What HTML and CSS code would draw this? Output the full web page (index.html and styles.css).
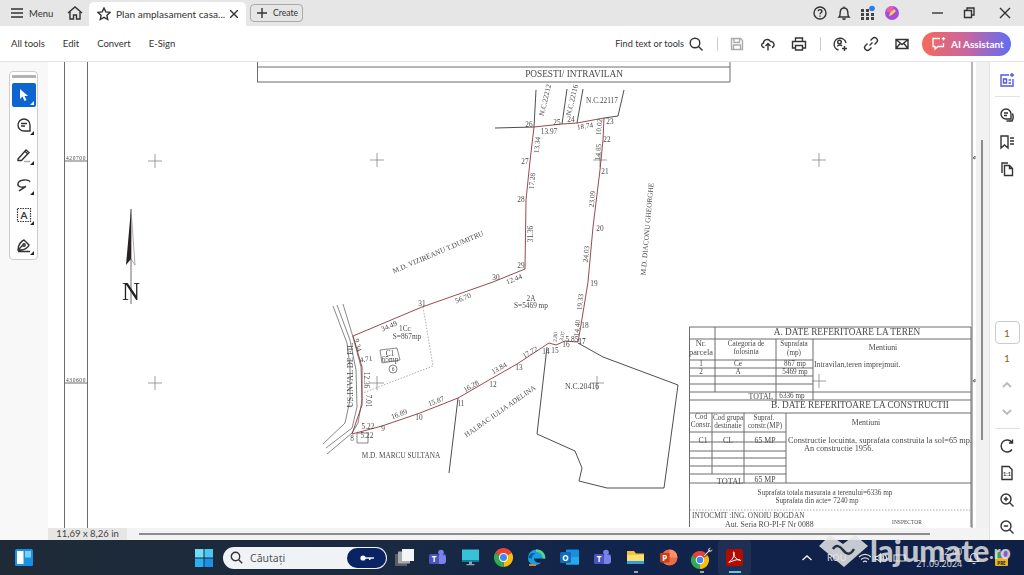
FILE: index.html
```html
<!DOCTYPE html>
<html lang="en">
<head>
    <meta charset="UTF-8">
    <meta name="viewport" content="width=device-width, initial-scale=1.0">
    <title>Plan amplasament casa</title>
    <link rel="stylesheet" href="styles.css">
</head>
<body>
    <div class="titlebar">
        <svg class="ico" width="12" height="12" viewBox="0 0 12 12"><path d="M0 2h12M0 6h12M0 10h12"/></svg>
        <span class="menu-label">Menu</span>
        <svg class="ico home" width="16" height="16" viewBox="0 0 16 16"><path d="M1 8 8 2l7 6M3 7v7h3.5v-4h3v4H13V7"/></svg>
        <div class="tab">
            <svg class="ico" width="14" height="14" viewBox="0 0 14 14"><path d="m7 1 1.8 3.9 4.2.5-3.100 2.900.8 4.200L7 10.400 3.300 12.500l.8-4.200L1 5.400l4.200-.5z"/></svg>
            <span class="tab-title">Plan amplasament casa...</span>
            <svg class="ico tab-close" width="8" height="8" viewBox="0 0 8 8"><path d="m0 0 8 8M8 0 0 8"/></svg>
        </div>
        <button class="create"><svg class="ico" width="10" height="10" viewBox="0 0 10 10"><path d="M5 0v10M0 5h10"/></svg>Create</button>
        <div class="title-right">
            <svg class="ico" width="16" height="16" viewBox="0 0 16 16"><circle cx="8" cy="8" r="6"/><path d="M6.200 6.300C6.300 4 10 4.200 9.900 6.400 9.800 7.800 8 7.700 8 9.300M8 10.600v1.200"/></svg>
            <svg class="ico" width="16" height="16" viewBox="0 0 16 16"><path d="M3 12c1.500-1.500 1-3 1.200-5C4.500 4.500 6 3 8 3s3.500 1.500 3.800 4c.2 2-.3 3.500 1.200 5zM6.500 13.500c.7 1 2.300 1 3 0M8 1.500V3"/></svg>
            <svg width="16" height="16" viewBox="0 0 16 16"><path class="dots" d="M1 4h3v3H1zM6 4h3v3H6zM1 8h3v3H1zM6 8h3v3H6zM11 8h3v3h-3zM1 12h3v3H1zM6 12h3v3H6zM11 12h3v3h-3z"/><circle cx="12" cy="3.500" r="2.800" fill="#2680eb"/></svg>
            <svg width="16" height="16" viewBox="0 0 16 16"><circle cx="8" cy="8" r="7" fill="#a44be0"/><path d="M2 6a7 7 0 0 1 8-5l-3 7z" fill="#e85fb0"/><path d="m5 11 1-3 4-4 2 2-4 4z" fill="#f7d24a"/></svg>
            <svg class="ico win-first" width="16" height="16" viewBox="0 0 16 16"><path d="M2 8h11"/></svg>
            <svg class="ico" width="16" height="16" viewBox="0 0 16 16"><path d="M3.500 5.500h7v7h-7zM6 5.500V3h7v7h-2.500"/></svg>
            <svg class="ico win-close" width="16" height="16" viewBox="0 0 16 16"><path d="m3 3 10 10M13 3 3 13"/></svg>
        </div>
    </div>

    <div class="toolbar">
        <nav class="tool-nav">
            <span>All tools</span>
            <span>Edit</span>
            <span>Convert</span>
            <span>E-Sign</span>
        </nav>
        <div class="tool-right">
            <span class="find">Find text or tools</span>
            <svg class="ico search" width="16" height="16" viewBox="0 0 16 16"><circle cx="7" cy="7" r="4.800"/><path d="m10.500 10.500 4 4"/></svg>
            <span class="divider"></span>
            <svg class="ico tool-icon muted" width="16" height="16" viewBox="0 0 16 16"><path d="M2.500 2.500h9l2 2v9h-11zM5 2.500v4h5.500v-4M4.500 13.500v-4.500h7v4.500"/></svg>
            <svg class="ico tool-icon" width="16" height="16" viewBox="0 0 16 16"><path d="M4.500 11.500C1.500 11.500.5 8 3.500 7 3.500 3.500 8.500 2 10.500 5.500c3.500-.5 5 4.500 1.500 6M8 14.500V7.500M5.500 10 8 7.500l2.500 2.500"/></svg>
            <svg class="ico tool-icon" width="16" height="16" viewBox="0 0 16 16"><path d="M4.500 5V2h7v3M4 12H1.500V5.500h13V12H12M4.500 9.500h7v4.500h-7z"/></svg>
            <span class="divider"></span>
            <svg class="ico tool-icon" width="16" height="16" viewBox="0 0 16 16"><path d="M6.500 14A6 6 0 1 1 14 7M5.500 10.500c0-2 4-2 4.500-.5"/><circle cx="7.500" cy="6" r="1.800"/><path d="M12.500 10v5M10 12.500h5"/></svg>
            <svg class="ico tool-icon" width="16" height="16" viewBox="0 0 16 16"><path d="M6.500 9.500 9.500 6.500M7.500 4.500l2-2a2.800 2.800 0 0 1 4 4l-2 2M8.500 11.500l-2 2a2.800 2.800 0 0 1-4-4l2-2"/></svg>
            <svg class="ico tool-icon" width="16" height="16" viewBox="0 0 16 16"><path d="M2 3.500h12v9H2zM2 3.500l6 5 6-5M2 12.500l4.500-5.500M14 12.500 9.500 7"/></svg>
            <button class="ai-btn">
                <svg width="15" height="15" viewBox="0 0 15 15" fill="none" stroke="#fff" stroke-width="1.300"><path d="M9 2.500H2v8h2v2.500l3-2.500h5.500V7"/><path d="M12.500 1v3.500M10.800 2.700h3.400"/><path d="M4.500 6.500h.1M8.500 6.500h.1" stroke-width="2"/></svg>
                AI Assistant
            </button>
        </div>
    </div>

    <div class="workspace">
        <aside class="left-rail">
            <div class="tool-panel">
                <div class="grip"></div>
                <div class="rail-tool selected">
                    <svg width="14" height="14" viewBox="0 0 14 14"><path d="M3 1v10l2.500-2.500L7.500 13l2-1-2-4H11z" fill="#fff"/></svg>
                </div>
                <div class="rail-tool more">
                    <svg class="ico" width="16" height="16" viewBox="0 0 16 16"><path d="M14 8A6 6 0 1 0 8 14h6zM5 6.500h6M5 9h4"/></svg>
                </div>
                <div class="rail-tool more">
                    <svg class="ico" width="16" height="16" viewBox="0 0 16 16"><path d="M2 12 10 3l3 2.500-7.500 8H2zM9 4.500l3 2.500"/><path d="M8 14.500h6" stroke="#aaa"/></svg>
                </div>
                <div class="rail-tool more">
                    <svg class="ico" width="16" height="16" viewBox="0 0 16 16"><path d="M14 5c-1-3-11-3-12 1.500C1 10 6 11 10 9.500 6 12 4 13 3 14"/></svg>
                </div>
                <div class="rail-tool more">
                    <svg class="ico dotted" width="16" height="16" viewBox="0 0 16 16"><path d="M1.500 1.500h13v13h-13z"/><text class="letter" x="8" y="12">A</text></svg>
                </div>
                <div class="rail-tool more">
                    <svg class="ico" width="16" height="16" viewBox="0 0 16 16"><path d="M2 13c0-5 3-9 6-10l5 5c-1 3-5 5-8 5zM2 13l5-5M2 14.500h12"/><circle cx="8" cy="8" r="1.200"/></svg>
                </div>
            </div>
        </aside>

        <main class="doc-column">
            <div class="doc-row">
                <div class="sheet">
                    <svg class="drawing" width="928" height="466" viewBox="48 62 928 466">
                        <!-- sheet frame and title box -->
                        <path class="frame" d="M64.500 62v466M87.500 62v466M972 62v466M257.500 62v20M730 62v20M257 67h473M257 82h473M64 161h24M64 383h24"/>
                        <text class="lbl t9" x="574" y="74">POSESTI/ INTRAVILAN</text>
                        <text class="lbl t55 coord" x="76" y="158">420700</text>
                        <text class="lbl t55 coord" x="76" y="380">430600</text>
                        <path class="frame" d="M973 158l2-2v3zM973 381l2-2v3z"/>

                        <!-- grid crosses -->
                        <path class="cross" d="M148 161h14M155 154v14M370 160h14M377 153v14M593 160h14M600 153v14M812 160h14M819 153v14M148 383h14M155 376v14M370 383h14M377 376v14M590 383h14M597 376v14M812 381h14M819 374v14"/>

                        <!-- north arrow -->
                        <path class="frame" d="M131 209v95"/>
                        <path d="M131 209 126 265 131 259z" fill="#2a2024"/>
                        <path d="M131 209 135 265 131 259" fill="none" stroke="#777" stroke-width=".6"/>
                        <text class="north" x="131" y="291">N</text>

                        <!-- neighbours -->
                        <path class="line" d="M495 128 534 127M536 90 534 127M567 89 562 124M583 89 577 123M624 90 618 116 604 118M458 398 449 473"/>
                        <path class="line" d="M578 343 603 357 678 385 664 488 607 488 579 481 582 468 575 451 537 434 547 347"/>
                        <path class="thin" d="M333 306 347 343 350 367 350 400 345 423 323 444M337 305 350 340 356 370 357 407 352 428 326 448M343 304 353 337 361 367 362 400 358 423 352 433 327 454"/>
                        <path class="thin" d="M357 433h11v10h-11z"/>

                        <!-- parcel boundary -->
                        <polyline class="boundary" points="534,127 562,124 577,123 604,118 603,140 600,170 593,227 588,282 581,325 578,342 565,341 556,345 549,343 517,364 489,380 458,398 420,413 382,426 352,434 362,405 362,367 353,336 422,307 493,282 525,269 526,200 530,161 534,127"/>
                        <path class="dash" d="M423 307 433 366 363 393"/>

                        <!-- house -->
                        <path class="thin" d="M380 350 397 348 400 360 382 363z"/>
                        <circle class="thin" cx="393" cy="369" r="4"/>
                        <text class="lbl t7" x="390" y="353">C1</text>
                        <text class="lbl t7" x="390" y="359">65mp</text>
                        <text class="lbl t55" x="393" y="369">6</text>

                        <!-- point numbers and lengths -->
                        <text class="lbl t7" x="529" y="124">26</text>
                        <text class="lbl t7" x="557" y="122">25</text>
                        <text class="lbl t7" x="571" y="119">24</text>
                        <text class="lbl t7" x="610" y="121">23</text>
                        <text class="lbl t7" x="607" y="139">22</text>
                        <text class="lbl t7" x="605" y="171">21</text>
                        <text class="lbl t7" x="600" y="228">20</text>
                        <text class="lbl t7" x="594" y="283">19</text>
                        <text class="lbl t7" x="585" y="325">18</text>
                        <text class="lbl t7 dark" x="582" y="341">17</text>
                        <text class="lbl t7" x="566" y="344">16</text>
                        <text class="lbl t7" x="555" y="350">15</text>
                        <text class="lbl t7" x="546" y="351">14</text>
                        <text class="lbl t7" x="519" y="367">13</text>
                        <text class="lbl t7" x="493" y="384">12</text>
                        <text class="lbl t7" x="461" y="403">11</text>
                        <text class="lbl t7" x="419" y="417">10</text>
                        <text class="lbl t7" x="383" y="428">9</text>
                        <text class="lbl t7" x="352" y="438">8</text>
                        <text class="lbl t7" x="525" y="161">27</text>
                        <text class="lbl t7" x="521" y="199">28</text>
                        <text class="lbl t7" x="521" y="265">29</text>
                        <text class="lbl t7" x="496" y="277">30</text>
                        <text class="lbl t7" x="422" y="303">31</text>
                        <text class="lbl t7" x="549" y="131">13.97</text>
                        <text class="lbl t7" x="585" y="126" transform="rotate(-8 585 126)">18.74</text>
                        <text class="lbl t7" x="599" y="127" transform="rotate(-85 599 127)">10.02</text>
                        <text class="lbl t7" x="598" y="152" transform="rotate(-85 598 152)">14.85</text>
                        <text class="lbl t7" x="537" y="145" transform="rotate(-85 537 145)">13.34</text>
                        <text class="lbl t7" x="532" y="181" transform="rotate(-85 532 181)">17.28</text>
                        <text class="lbl t7" x="530" y="234" transform="rotate(-90 530 234)">31.36</text>
                        <text class="lbl t7" x="592" y="199" transform="rotate(-85 592 199)">23.09</text>
                        <text class="lbl t7" x="586" y="254" transform="rotate(-85 586 254)">24.03</text>
                        <text class="lbl t7" x="580" y="302" transform="rotate(-85 580 302)">19.33</text>
                        <text class="lbl t7" x="514" y="279" transform="rotate(-22 514 279)">12.44</text>
                        <text class="lbl t7" x="463" y="298" transform="rotate(-22 463 298)">56.70</text>
                        <text class="lbl t7" x="389" y="326" transform="rotate(-22 389 326)">34.49</text>
                        <text class="lbl t7" x="358" y="345" transform="rotate(75 358 345)">9.34</text>
                        <text class="lbl t7" x="366" y="359" transform="rotate(-10 366 359)">4.71</text>
                        <text class="lbl t7" x="366" y="380" transform="rotate(90 366 380)">12.36</text>
                        <text class="lbl t7" x="368" y="401" transform="rotate(90 368 401)">7.01</text>
                        <text class="lbl t7" x="368" y="426">5.22</text>
                        <text class="lbl t7" x="367" y="435">5.22</text>
                        <text class="lbl t7" x="399" y="414" transform="rotate(-20 399 414)">16.89</text>
                        <text class="lbl t7" x="436" y="401" transform="rotate(-20 436 401)">15.87</text>
                        <text class="lbl t7" x="471" y="386" transform="rotate(-30 471 386)">16.28</text>
                        <text class="lbl t7" x="499" y="368" transform="rotate(-30 499 368)">13.84</text>
                        <text class="lbl t7" x="530" y="352" transform="rotate(-30 530 352)">17.72</text>
                        <text class="lbl t55" x="555" y="337" transform="rotate(-85 555 337)">2.80</text>
                        <text class="lbl t55" x="562" y="336" transform="rotate(-75 562 336)">3.07</text>
                        <text class="lbl t7" x="572" y="339">5.85</text>
                        <text class="lbl t7" x="577" y="328" transform="rotate(-85 577 328)">14.40</text>

                        <!-- owners and areas -->
                        <text class="lbl t7" x="545" y="100" transform="rotate(-77 545 100)">N.C.22212</text>
                        <text class="lbl t7" x="572" y="100" transform="rotate(-77 572 100)">N.C.22116</text>
                        <text class="lbl t7" x="602" y="100">N.C.22117</text>
                        <text class="lbl t7" x="438" y="252" transform="rotate(-23 438 252)">M.D. VIZIREANU T.DUMITRU</text>
                        <text class="lbl t7" x="647" y="229" transform="rotate(-85 647 229)">M.D. DIACONU GHEORGHE</text>
                        <text class="lbl t7" x="500" y="411" transform="rotate(-35 500 411)">HALBAC IULIA ADELINA</text>
                        <text class="lbl t7" x="401" y="455">M.D. MARCU SULTANA</text>
                        <text class="lbl t83" x="350" y="375" transform="rotate(-90 350 375)">US.INVAL DE FIL</text>
                        <text class="lbl t75" x="582" y="386">N.C.20416</text>
                        <text class="lbl t7" x="531" y="298">2A</text>
                        <text class="lbl t7" x="531" y="305">S=5469 mp</text>
                        <text class="lbl t7" x="405" y="328">1Cc</text>
                        <text class="lbl t7" x="407" y="336">S=867mp</text>

                        <!-- data table -->
                        <path class="frame" d="M689.500 327v200M971 327v200M689 327h282M689 339h282M689 360h124M689 368h124M689 376h124M689 384h124M689 392h282M689 400h282M689 413h282M689 432h97M689 442h97M689 451h97M689 458h97M689 466h97M689 474h97M689 483h282M715 327v65M776 339v65M813 339v61M712 413v61M744 413v70M786 413v70"/>
                        <path class="dash" d="M690 510h280"/>
                        <text class="lbl t9" x="847" y="332">A. DATE REFERITOARE LA TEREN</text>
                        <text class="lbl t83" x="701" y="343">Nr.</text>
                        <text class="lbl t83" x="701" y="352">parcela</text>
                        <text class="lbl t6" x="746" y="344">Categoria de</text>
                        <text class="lbl t6" x="746" y="352">folosinta</text>
                        <text class="lbl t6" x="794" y="344">Suprafata</text>
                        <text class="lbl t6" x="794" y="353">(mp)</text>
                        <text class="lbl t75" x="883" y="347">Mentiuni</text>
                        <text class="lbl t6" x="701" y="364">1</text>
                        <text class="lbl t6" x="738" y="364">Ce</text>
                        <text class="lbl t6" x="795" y="364">867 mp</text>
                        <text class="txt t75" x="814" y="364">Intravilan,teren imprejmuit.</text>
                        <text class="lbl t6" x="701" y="372">2</text>
                        <text class="lbl t6" x="738" y="372">A</text>
                        <text class="lbl t6" x="795" y="372">5469 mp</text>
                        <text class="lbl t75" x="761" y="396">TOTAL</text>
                        <text class="lbl t6" x="792" y="396">6336 mp</text>
                        <text class="lbl t9" x="860" y="405">B.  DATE REFERITOARE LA CONSTRUCTII</text>
                        <text class="lbl t6" x="701" y="417">Cod</text>
                        <text class="lbl t6" x="701" y="425">Constr.</text>
                        <text class="lbl t6" x="728" y="418">Cod grupa</text>
                        <text class="lbl t6" x="728" y="426">destinatie</text>
                        <text class="lbl t6" x="764" y="418">Supraf.</text>
                        <text class="lbl t6" x="765" y="426">constr.(MP)</text>
                        <text class="lbl t75" x="866" y="422">Mentiuni</text>
                        <text class="lbl t75" x="703" y="440">C1</text>
                        <text class="lbl t75" x="728" y="440">CL</text>
                        <text class="lbl t75" x="765" y="440">65 MP</text>
                        <text class="txt t83" x="788" y="440">Constructie locuinta, suprafata construita la sol=65 mp.</text>
                        <text class="txt t83" x="804" y="448">An constructie 1956.</text>
                        <text class="lbl t83" x="730" y="481">TOTAL</text>
                        <text class="lbl t75" x="765" y="479">65 MP</text>
                        <text class="lbl t6" x="825" y="493">Suprafata totala masurata a terenului=6336 mp</text>
                        <text class="lbl t6" x="817" y="501">Suprafata din acte= 7240 mp</text>
                        <text class="txt t7" x="692" y="515">INTOCMIT :ING. ONOIU BOGDAN</text>
                        <text class="txt t75" x="725" y="524">Aut. Seria RO-PI-F  Nr 0088</text>
                        <text class="lbl t55" x="907" y="522">INSPECTOR</text>
                    </svg>
                </div>
                <div class="gutter"><div class="v-thumb"></div></div>
            </div>
            <div class="statusbar">
                <span class="page-size">11,69 x 8,26 in</span>
                <div class="h-thumb"></div>
            </div>
        </main>

        <aside class="right-rail">
            <div class="rr-btn">
                <svg width="16" height="16" viewBox="0 0 16 16" fill="none" stroke="#5258e4" stroke-width="1.400"><path d="M10 3H2v11h12V7M4.500 7h3v4h-3zM9.500 8h2.500M9.500 11H12"/><path d="M13 1v4M11 3h4"/></svg>
            </div>
            <span class="rr-line"></span>
            <div class="rr-btn">
                <svg class="ico" width="16" height="16" viewBox="0 0 16 16"><path d="M12 7a5 5 0 1 0-5 5h5zM5 6h4M5 8.500h3"/><path d="M13.500 6.500c1 3 .5 6-.5 7.500H7.500"/></svg>
            </div>
            <div class="rr-btn">
                <svg class="ico" width="16" height="16" viewBox="0 0 16 16"><path d="M2 2h7v12l-3.500-3L2 14zM11 4h4M11 7h4M11 10h4"/></svg>
            </div>
            <div class="rr-btn">
                <svg class="ico" width="16" height="16" viewBox="0 0 16 16"><path d="M3 12V2h6M5.500 4.500h5l3 3v7h-8zM10.500 4.500v3h3"/></svg>
            </div>
            <div class="page-box">1</div>
            <div class="rr-btn page-total">1</div>
            <div class="rr-btn">
                <svg class="ico light" width="12" height="12" viewBox="0 0 12 12"><path d="m2 8 4-4 4 4"/></svg>
            </div>
            <div class="rr-btn">
                <svg class="ico light" width="12" height="12" viewBox="0 0 12 12"><path d="m2 4 4 4 4-4"/></svg>
            </div>
            <span class="rr-line"></span>
            <div class="rr-btn rr-after-line">
                <svg class="ico" width="16" height="16" viewBox="0 0 16 16"><path d="M13 11.500A6 6 0 1 1 13 4.500M13.500 1.500v3.500H10"/></svg>
            </div>
            <div class="rr-btn">
                <svg class="ico" width="16" height="16" viewBox="0 0 16 16"><path d="M3 1.500h7l3 3v10H3z"/><text class="fit" x="8" y="11">1:1</text></svg>
            </div>
            <div class="rr-btn">
                <svg class="ico" width="16" height="16" viewBox="0 0 16 16"><circle cx="7" cy="7" r="5"/><path d="m10.500 10.500 4 4M4.800 7h4.400M7 4.800v4.400"/></svg>
            </div>
            <div class="rr-btn">
                <svg class="ico" width="16" height="16" viewBox="0 0 16 16"><circle cx="7" cy="7" r="5"/><path d="m10.500 10.500 4 4M4.800 7h4.400"/></svg>
            </div>
        </aside>
    </div>

    <footer class="taskbar">
        <svg class="widgets" width="18" height="18" viewBox="0 0 18 18"><rect width="18" height="17" rx="1.500" fill="#1a8fe3"/><rect x="2" y="2" width="6.500" height="13" fill="#fff"/><rect x="10" y="2" width="6" height="6.500" fill="#7cd0f7"/></svg>
        <svg class="start" width="18" height="18" viewBox="0 0 18 18"><path d="M0 0h8.500v8.500H0z" fill="#6fdcf8"/><path d="M9.500 0H18v8.500H9.500z" fill="#4ac6f3"/><path d="M0 9.500h8.500V18H0z" fill="#2ab0ef"/><path d="M9.500 9.500H18V18H9.500z" fill="#1a90e6"/></svg>
        <div class="search-pill">
            <svg class="ico" width="13" height="13" viewBox="0 0 13 13"><circle cx="5.500" cy="5.500" r="4.200"/><path d="m8.700 8.700 3.500 3.500"/></svg>
            <span class="search-text">Căutați</span>
            <span class="search-key">
                <svg width="14" height="8" viewBox="0 0 14 8" fill="#fff"><circle cx="3" cy="4" r="2.600"/><path d="M5 3.300h9v1.400H5z"/><path d="M9 4h1.500v2H9z"/></svg>
            </span>
        </div>
        <div class="apps">
            <div class="app">
                <svg width="19" height="19" viewBox="0 0 19 19"><rect y="6" width="12" height="12" fill="#5b5f63"/><rect x="3" y="3.500" width="12" height="12" fill="#a7acb0"/><rect x="7" y="1" width="12" height="12" fill="#f4f5f6"/></svg>
            </div>
            <div class="app">
                <svg width="19" height="19" viewBox="0 0 19 19"><circle cx="13" cy="4.500" r="2.800" fill="#7b83eb"/><circle cx="16" cy="8" r="2" fill="#5059c9"/><rect x="9" y="7" width="9" height="9" rx="3" fill="#7b83eb"/><rect x="1" y="6" width="10" height="10" rx="1.500" fill="#4b53bc"/><text class="app-letter" x="6" y="14">T</text></svg>
            </div>
            <div class="app">
                <svg width="19" height="19" viewBox="0 0 19 19"><rect x="1" y="1.500" width="17" height="12" fill="#39c2d7"/><rect x="1" y="12" width="17" height="1.500" fill="#0f7f99"/><path d="M8 13.500h3V16H8zM5.500 16h8v1.300h-8z" fill="#8fa3ad"/></svg>
            </div>
            <div class="app">
                <svg width="19" height="19" viewBox="0 0 18 18"><path d="M9 9 1.200 4.500A9 9 0 0 1 16.800 4.500z" fill="#ea4335"/><path d="M9 9 16.800 4.500A9 9 0 0 1 9 18z" fill="#fbbc05"/><path d="M9 9V18A9 9 0 0 1 1.200 4.500z" fill="#34a853"/><circle cx="9" cy="9" r="4.300" fill="#fff"/><circle cx="9" cy="9" r="3.300" fill="#4285f4"/></svg>
            </div>
            <div class="app">
                <svg width="19" height="19" viewBox="0 0 19 19"><path d="M1 10C1 3 8 0 13 2c3.500 1.500 5.500 5 5 8.500H7c0 3 3 5 7 4-3 3.500-8 3.500-10.500 1C1.500 14 1 12 1 10z" fill="#1b9de2"/><path d="M1 10c1-4 5-6 8-4.500C6.500 5.500 5 8 5 10.500z" fill="#0c59a4"/><path d="M9 4c4 0 6 2 7 6.500H18.500C18.500 6 15 1 9 1.500z" fill="#5ad67d"/><path d="M2 16h7v2H2z" fill="#c78a2c"/></svg>
            </div>
            <div class="app">
                <svg width="19" height="19" viewBox="0 0 19 19"><rect x="6" y="1.500" width="13" height="15" rx="1" fill="#1490df"/><path d="M6 9h13v7.500H6z" fill="#28a8ea"/><rect x="0" y="4" width="11" height="11" rx="1.500" fill="#0f6cbd"/><text class="app-letter" x="5.500" y="13">O</text></svg>
            </div>
            <div class="app">
                <svg width="19" height="19" viewBox="0 0 19 19"><circle cx="13" cy="4.500" r="2.800" fill="#7b83eb"/><circle cx="16" cy="8" r="2" fill="#5059c9"/><rect x="9" y="7" width="9" height="9" rx="3" fill="#7b83eb"/><rect x="1" y="6" width="10" height="10" rx="1.500" fill="#4b53bc"/><text class="app-letter" x="6" y="14">T</text></svg>
            </div>
            <div class="app running">
                <svg width="19" height="19" viewBox="0 0 19 19"><path d="M1 3h7l2 2.500h8V16H1z" fill="#f5c33b"/><path d="M1 7h17v9H1z" fill="#ffdf6e"/><path d="M1 13h17v3H1z" fill="#2f9fe0"/></svg>
            </div>
            <div class="app">
                <svg width="19" height="19" viewBox="0 0 19 19"><circle cx="10.500" cy="9.500" r="8" fill="#ed6c47"/><path d="M10.500 1.500a8 8 0 0 1 8 8h-8z" fill="#ff8f6b"/><rect x="1" y="5" width="9.500" height="9.500" rx="1" fill="#c43e1c"/><text class="app-letter" x="5.700" y="12.500">P</text></svg>
            </div>
            <div class="app running">
                <svg width="22" height="22" viewBox="0 0 22 22"><g transform="translate(0 4)"><path d="M9 9 1.200 4.500A9 9 0 0 1 16.800 4.500z" fill="#ea4335"/><path d="M9 9 16.800 4.500A9 9 0 0 1 9 18z" fill="#fbbc05"/><path d="M9 9V18A9 9 0 0 1 1.200 4.500z" fill="#34a853"/><circle cx="9" cy="9" r="4.300" fill="#fff"/><circle cx="9" cy="9" r="3.300" fill="#4285f4"/></g><path d="M12 9 17 4c-.5-2 1-3.500 3-3.500l-1.500 2 1 1 2-1.500c0 2-1.500 3.500-3.500 3l-5 5z" fill="#d5d8dc" stroke="#333" stroke-width=".5"/></svg>
            </div>
            <div class="app active">
                <svg width="17" height="17" viewBox="0 0 17 17"><rect width="17" height="17" rx="2.500" fill="#b30b00"/><path d="M2.800 13.200C6 11.500 8.500 7 8.200 3.500 8 2 7 3 7.500 5c1 3.500 3.500 6 7 6.500.5-1.500-5-1-8.500.8-2.500 1-3.500 1.200-3.200.9z" fill="none" stroke="#fff" stroke-width="1"/></svg>
            </div>
        </div>
        <div class="tray">
            <svg class="tray-chevron" width="12" height="12" viewBox="0 0 12 12"><path d="m1.500 8 4.500-4 4.500 4"/></svg>
            <span class="tray-lang">ROU</span>
            <svg class="tray-icon wifi" width="14" height="14" viewBox="0 0 14 14"><path d="M1 6c3.500-3.500 8.500-3.500 12 0M3 8.500c2.500-2 5.500-2 8 0M5 11c1.200-1 2.800-1 4 0"/></svg>
            <svg class="tray-icon" width="14" height="14" viewBox="0 0 14 14"><path d="M1.500 5.500v3h2l3 2.500v-8l-3 2.500zM9 5c1 1 1 3 0 4M11 3.500c2 2 2 5 0 7"/></svg>
            <svg class="tray-icon batt" width="14" height="14" viewBox="0 0 14 14"><path d="M1 4h11v6H1zM12.500 6v2"/></svg>
            <div class="clock">
                <span>12:40</span>
                <span>21.09.2024</span>
            </div>
            <svg class="tray-icon bell" width="14" height="14" viewBox="0 0 14 14"><path d="M2.500 10.500c1-1 1-2 1-4C3.500 4 5 2.500 7 2.500S10.500 4 10.500 6.500c0 2 0 3 1 4zM5.500 12c.7.800 2.300.800 3 0"/></svg>
            <svg class="copilot" width="16" height="18" viewBox="0 0 16 18"><circle cx="6" cy="6" r="4" fill="#3aa655"/><circle cx="11" cy="6" r="4" fill="#8a5ad6"/><rect x="2" y="9" width="13" height="8" rx="1" fill="#e6b422"/><text class="pre" x="8.500" y="15.500">PRE</text></svg>
        </div>
    </footer>

    <!-- site watermark over the taskbar -->
    <div class="watermark">
        <svg width="49" height="32" viewBox="0 0 49 32"><path d="M0 11 11 0l13 9L36 0l13 11-24 21z" fill="#e6e6e6" fill-opacity=".85"/><path d="M14 14c3-5 7-3 10 1s7 6 11-1" fill="none" stroke="#24303c" stroke-width="2.500"/></svg>
        <span class="wm-name">lajumate</span><span class="wm-tld">.ro</span>
    </div>
</body>
</html>
```

FILE: styles.css
```css
* {
    box-sizing: border-box;
}
html, body {
    margin: 0;
    height: 575px;
    overflow: hidden;
}
body {
    position: relative;
    display: flex;
    flex-direction: column;
    width: 1024px;
    background: #fff;
    color: #333;
    font-family: Lato, "Noto Sans", Arial, sans-serif;
    font-size: 9.5px;
}
svg {
    display: block;
    flex-shrink: 0;
}
button {
    font-family: inherit;
    cursor: pointer;
}
.ico {
    fill: none;
    stroke: #333;
    stroke-width: 1.4;
}
.ico.muted {
    stroke: #aaa;
}
.ico.light {
    stroke: #bbb;
    stroke-width: 1.8;
}
.dots {
    fill: #444;
}

/* title bar */
.titlebar {
    display: flex;
    align-items: center;
    height: 26px;
    padding-left: 11px;
    background: #e6e6e6;
}
.menu-label {
    width: 21px;
    margin-left: 6px;
    font-size: 9.5px;
}
.home {
    margin-left: 17px;
}
.tab {
    display: flex;
    align-items: center;
    align-self: flex-end;
    width: 157px;
    height: 24px;
    margin-left: 6px;
    padding-left: 8px;
    background: #fff;
    border-radius: 5px 5px 0 0;
}
.tab-title {
    width: 106px;
    margin-left: 5px;
    font-size: 10.1px;
    white-space: nowrap;
}
.tab-close {
    margin-left: 8px;
}
.create {
    display: flex;
    align-items: center;
    gap: 6px;
    width: 53px;
    height: 18px;
    margin-left: 4px;
    padding: 0 0 0 6px;
    background: #e6e6e6;
    border: 1px solid #aaa;
    border-radius: 4px;
    color: #333;
    font-size: 8.6px;
}
.title-right {
    display: flex;
    align-items: center;
    gap: 8px;
    margin-left: auto;
    padding-right: 11px;
}
.win-first {
    margin-left: 22px;
}
.title-right .win-first + svg {
    margin-left: 7px;
}
.win-close {
    margin-left: 12px;
}

/* tool bar */
.toolbar {
    display: flex;
    align-items: center;
    height: 36px;
    padding: 0 13px 0 11px;
    background: #fff;
    border-bottom: 1px solid #e4e4e4;
}
.tool-nav {
    display: flex;
    gap: 18px;
}
.tool-right {
    display: flex;
    align-items: center;
    margin-left: auto;
}
.find {
    font-size: 9.2px;
}
.search {
    margin-left: 4px;
}
.divider {
    width: 1px;
    height: 14px;
    margin-left: 13px;
    background: #ccc;
}
.tool-icon {
    margin-left: 15px;
}
.divider + .tool-icon {
    margin-left: 11px;
}
.ai-btn {
    display: flex;
    align-items: center;
    gap: 5px;
    width: 89px;
    height: 24px;
    margin-left: 12px;
    padding: 0 0 0 9px;
    border: none;
    border-radius: 12px;
    background: linear-gradient(90deg, #f5695a 0%, #c866a0 50%, #5f6df5 100%);
    color: #fff;
    font-size: 10px;
    font-weight: 700;
}

/* main area */
.workspace {
    display: flex;
    flex: 1;
    min-height: 0;
}
.left-rail {
    width: 48px;
    padding: 9px 0 0 9px;
    background: #f8f8f8;
}
.tool-panel {
    display: flex;
    flex-direction: column;
    align-items: center;
    gap: 2px;
    width: 29px;
    height: 189px;
    background: #fff;
    border: 1px solid #ccc;
    border-radius: 4px;
}
.grip {
    width: 24px;
    height: 3px;
    margin: 3px 0 3px;
    background: #b3b3b3;
}
.rail-tool {
    position: relative;
    display: flex;
    align-items: center;
    justify-content: center;
    width: 24px;
    height: 28px;
}
.rail-tool.selected {
    height: 24px;
    margin-bottom: 2px;
    background: #0d66d0;
    border-radius: 2px;
}
.rail-tool.more::after,
.rail-tool.selected::after {
    content: "";
    position: absolute;
    right: 2px;
    bottom: 4px;
    border-style: solid;
    border-width: 0 0 4px 4px;
    border-color: transparent transparent #222 transparent;
}
.rail-tool.selected::after {
    bottom: 2px;
    border-bottom-color: #fff;
}
.dotted {
    stroke-width: 1.2;
    stroke-dasharray: 1.5 1;
}
.letter {
    fill: #333;
    stroke: none;
    font-size: 10px;
    font-weight: 700;
    text-anchor: middle;
}
.doc-column {
    display: flex;
    flex: 1;
    flex-direction: column;
    min-width: 0;
}
.doc-row {
    display: flex;
    flex: 1;
    min-height: 0;
}
.sheet {
    width: 928px;
    overflow: hidden;
    background: #fff;
}
.gutter {
    width: 13px;
    padding: 78px 0 0 5px;
    background: #f1f1f1;
}
.v-thumb {
    width: 2px;
    height: 300px;
    background: #8c8c8c;
}
.statusbar {
    display: flex;
    align-items: center;
    height: 12px;
    background: #f3f3f3;
}
.page-size {
    width: 79px;
    height: 12px;
    background: #e6e6e6;
    font-size: 9.5px;
    line-height: 12px;
    text-align: center;
    color: #444;
}
.h-thumb {
    width: 791px;
    height: 2px;
    margin-left: 12px;
    background: #8c8c8c;
}
.right-rail {
    display: flex;
    flex-direction: column;
    align-items: center;
    width: 35px;
    padding-top: 5px;
    background: #fff;
    border-left: 1px solid #e4e4e4;
}
.rr-btn {
    display: flex;
    align-items: center;
    justify-content: center;
    width: 26px;
    height: 26px;
    flex-shrink: 0;
}
.rr-line {
    width: 25px;
    height: 1px;
    margin: 3px 0;
    background: #e2e2e2;
    flex-shrink: 0;
}
.rr-btn + .rr-btn {
    margin-top: 1px;
}
.rr-line + .rr-btn {
    margin-top: 1px;
}
.rr-btn:nth-child(3) {
    margin-top: 2px;
}
.page-box {
    display: flex;
    align-items: center;
    justify-content: center;
    width: 25px;
    height: 23px;
    margin-top: auto;
    border: 1px solid #ccc;
    border-radius: 4px;
    color: #7a6a20;
    font-size: 10px;
    flex-shrink: 0;
}
.page-box + .page-total {
    margin-top: 1px;
}
.page-total {
    color: #7a6a20;
    font-size: 10px;
}
.fit {
    fill: #333;
    stroke: none;
    font-size: 5.500px;
    font-weight: 700;
    text-anchor: middle;
}

/* scanned drawing */
.drawing {
    filter: blur(.35px);
}
.drawing text {
    font-family: "Liberation Serif", "Times New Roman", serif;
    fill: #4a4a4a;
    dominant-baseline: central;
}
.lbl {
    text-anchor: middle;
}
.txt {
    text-anchor: start;
}
.t55 {
    font-size: 5.5px;
}
.coord {
    letter-spacing: .6px;
}
.t6 {
    font-size: 7.2px;
}
.t7 {
    font-size: 7.3px;
}
.t75 {
    font-size: 7.8px;
}
.t83 {
    font-size: 8.3px;
}
.t9 {
    font-size: 9.3px;
}
.drawing .dark {
    fill: #111;
}
.drawing .north {
    font-size: 25px;
    fill: #222;
    text-anchor: middle;
}
.frame {
    fill: none;
    stroke: #6d6d6d;
    stroke-width: 1;
}
.cross {
    fill: none;
    stroke: #777;
    stroke-width: .7;
}
.line {
    fill: none;
    stroke: #3a3a3a;
    stroke-width: .9;
}
.thin {
    fill: none;
    stroke: #555;
    stroke-width: .7;
}
.boundary {
    fill: none;
    stroke: #8d3440;
    stroke-width: .9;
}
.dash {
    fill: none;
    stroke: #8a8a8a;
    stroke-width: .7;
    stroke-dasharray: 1.5 1.5;
}

/* windows task bar */
.taskbar {
    display: flex;
    align-items: center;
    height: 35px;
    padding-left: 15px;
    background: linear-gradient(90deg, #1e2a36 0%, #1a2a3f 35%, #11244c 60%, #0f2047 100%);
    color: #e8e8e8;
    font-family: "Noto Sans", Arial, sans-serif;
}
.start {
    margin-left: 162px;
}
.search-pill {
    display: flex;
    align-items: center;
    width: 164px;
    height: 22px;
    margin-left: 10px;
    padding-left: 7px;
    background: #f0f3f6;
    border-radius: 11px;
}
.search-text {
    margin-left: 7px;
    color: #555;
    font-size: 10.5px;
}
.search-key {
    display: flex;
    align-items: center;
    justify-content: center;
    width: 39px;
    height: 20px;
    margin-left: auto;
    margin-right: 1px;
    background: #0a2463;
    border-radius: 10px;
}
.apps {
    display: flex;
    margin-left: 1px;
}
.app {
    position: relative;
    display: flex;
    align-items: center;
    justify-content: center;
    width: 33px;
    height: 35px;
}
.app.active {
    background: rgba(255, 255, 255, .06);
    border-radius: 4px;
}
.app.running::after,
.app.active::after {
    content: "";
    position: absolute;
    bottom: 2px;
    left: 50%;
    width: 4px;
    height: 2px;
    margin-left: -2px;
    background: #9aa4b0;
}
.app.active::after {
    width: 12px;
    margin-left: -6px;
    background: #5cc8f5;
}
.app-letter {
    fill: #fff;
    font-size: 8px;
    font-weight: 700;
    text-anchor: middle;
}
.tray {
    display: flex;
    align-items: center;
    margin-left: 50px;
}
.tray-chevron {
    fill: none;
    stroke: #eee;
    stroke-width: 1.4;
}
.tray-lang {
    margin-left: 14px;
    font-size: 9px;
}
.tray-icon {
    fill: none;
    stroke: #ddd;
    stroke-width: 1.1;
    margin-left: 2px;
}
.wifi {
    margin-left: 12px;
}
.batt {
    margin-left: 5px;
}
.clock {
    display: flex;
    flex-direction: column;
    align-items: flex-end;
    width: 43px;
    margin-left: 12px;
    font-size: 9px;
    line-height: 12px;
    color: #d8d8d8;
}
.bell {
    margin-left: 5px;
}
.copilot {
    margin-left: 12px;
}
.pre {
    fill: #222;
    font-size: 4.5px;
    font-weight: 700;
    text-anchor: middle;
}

/* watermark */
.watermark {
    position: absolute;
    left: 819px;
    top: 533px;
    display: flex;
    align-items: flex-end;
    height: 34px;
    font-family: Lato, "Noto Sans", sans-serif;
    font-weight: 900;
    color: rgba(232, 232, 232, .82);
    pointer-events: none;
}
.wm-name {
    margin-left: 2px;
    font-size: 31px;
    line-height: 34px;
}
.wm-tld {
    font-size: 18px;
    line-height: 30px;
}
```
